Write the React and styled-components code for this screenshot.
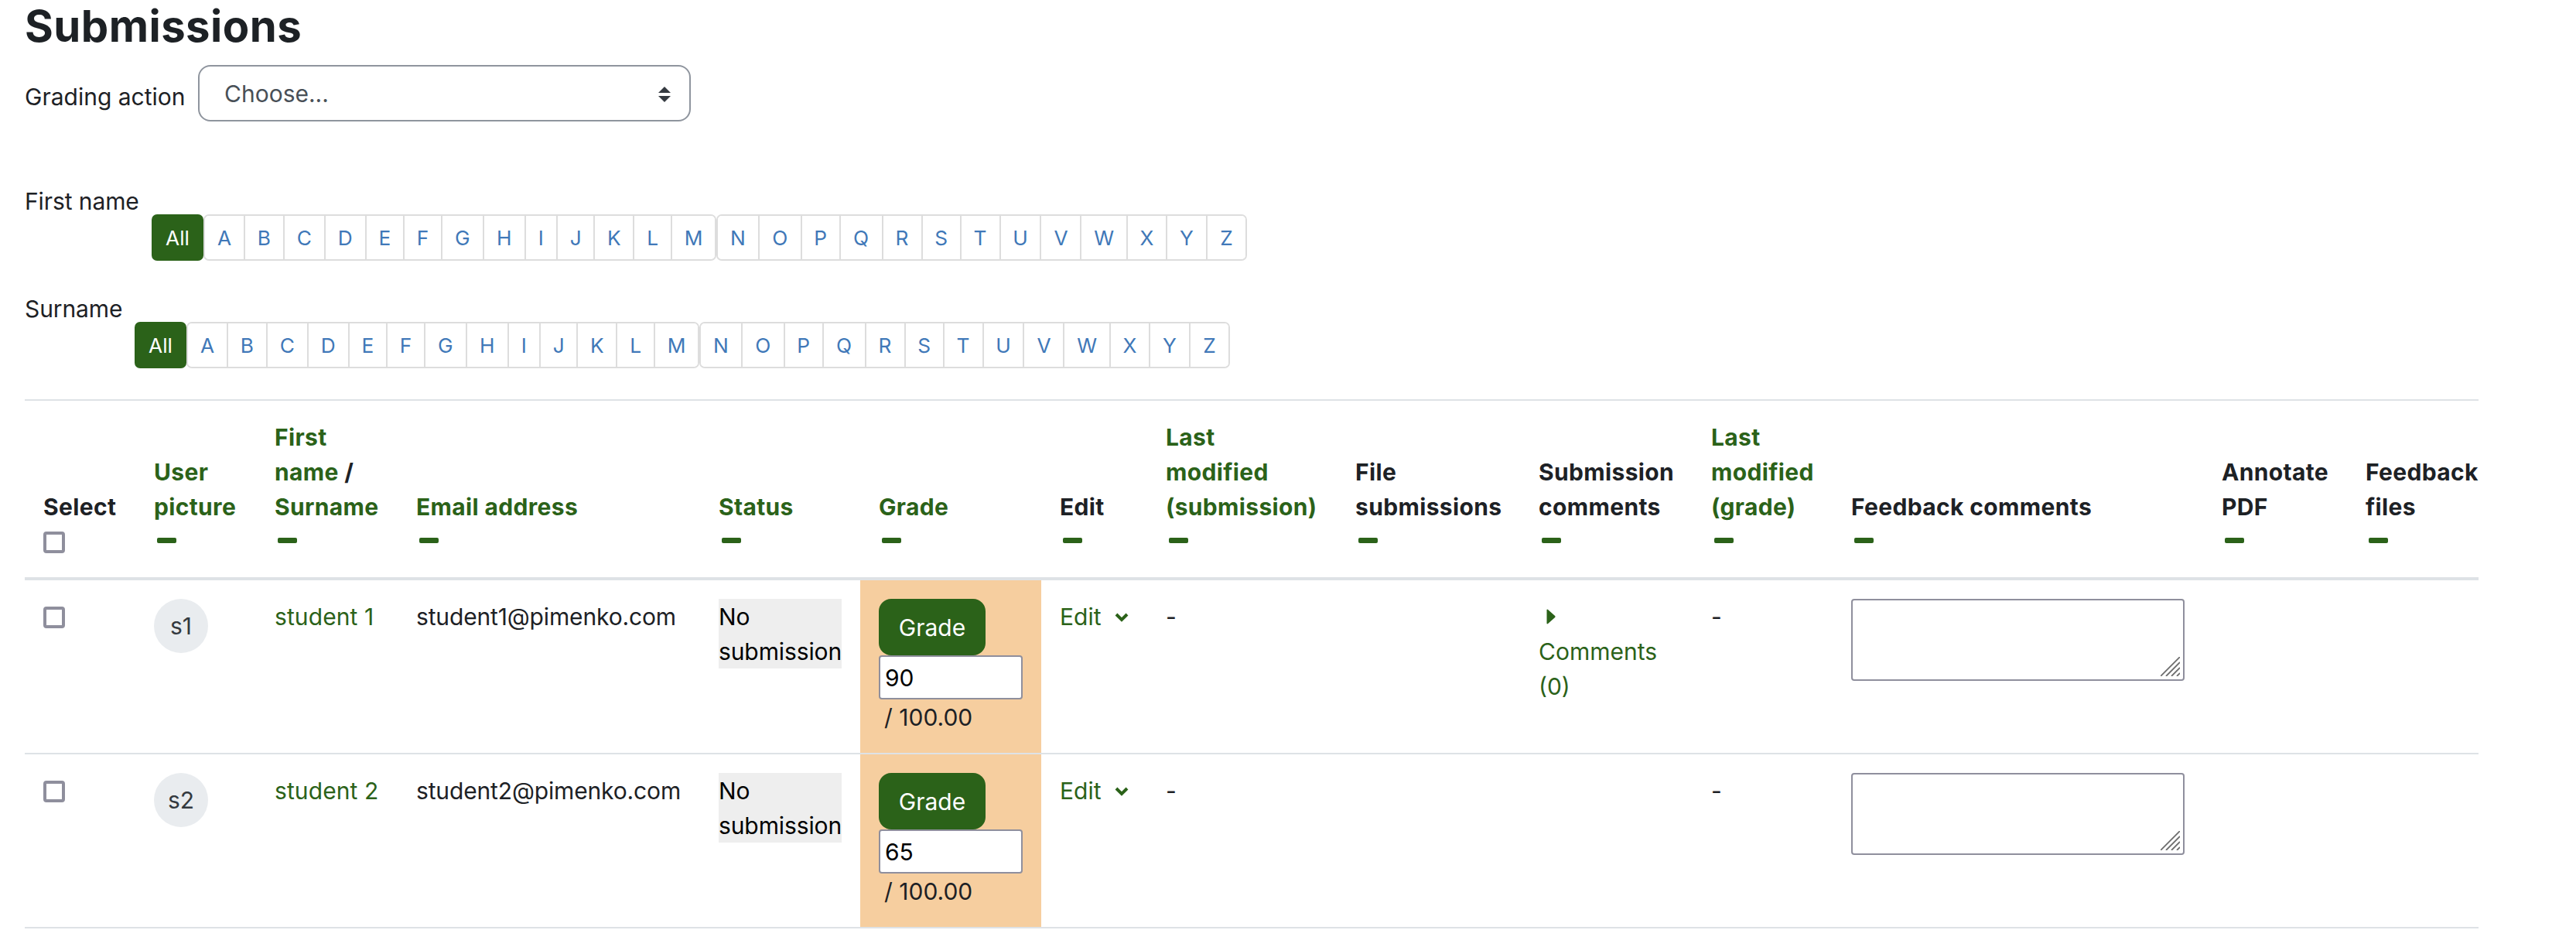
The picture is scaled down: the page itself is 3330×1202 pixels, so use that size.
import React, { useState } from 'react';
import styled, { createGlobalStyle, css } from 'styled-components';

const GREEN = '#2b6219';

const GlobalStyle = createGlobalStyle`
  *, *::before, *::after {
    box-sizing: border-box;
  }

  body {
    margin: 0;
    background: #ffffff;
    color: #1d2125;
    font-family: Inter, "Liberation Sans", sans-serif;
    font-size: 30px;
    line-height: 45px;
  }
`;

const Page = styled.main`
  width: 3330px;
  height: 1202px;
  padding-left: 32px;
  overflow: hidden;
`;

const Title = styled.h2`
  margin: 0;
  height: 84px;
  font-size: 56.25px;
  line-height: 69px;
  font-weight: 700;
  letter-spacing: 0.45px;
`;

const ActionRow = styled.div`
  display: flex;
  height: 154px;
`;

const ActionLabel = styled.label`
  width: 224px;
  padding-top: 19px;
  white-space: nowrap;
`;

const SelectBox = styled.button`
  display: flex;
  justify-content: space-between;
  align-items: center;
  width: 637px;
  height: 73px;
  padding: 2px 24px 0 32px;
  border: 2px solid #8f959e;
  border-radius: 16px;
  background: #ffffff;
  color: #495057;
  font: inherit;
`;

const InitialBar = styled.div`
  display: flex;
  height: ${p => p.$height}px;
`;

const InitialLabel = styled.span`
  width: ${p => p.$width}px;
  letter-spacing: -0.1px;
  white-space: nowrap;
`;

const InitialList = styled.div`
  display: flex;
  height: 60px;
  margin-top: 39px;
`;

const InitialGroup = styled.div`
  display: flex;
  width: ${p => p.$width}px;
  border: 2px solid #dddddd;
  border-radius: 7px;
  overflow: hidden;
`;

const Initial = styled.button`
  flex: ${p => p.$width} 0 0;
  padding: 0;
  border: none;
  background: #ffffff;
  color: #4078b8;
  font: inherit;
  font-size: 26.25px;
  text-align: center;
  cursor: pointer;

  & + & {
    border-left: 2px solid #dddddd;
  }
`;

const AllButton = styled(Initial)`
  flex: none;
  width: 67px;
  border-radius: 7px;
  background: ${GREEN};
  color: #ffffff;
`;

const Table = styled.table`
  width: 3172px;
  table-layout: fixed;
  border-collapse: separate;
  border-spacing: 0;
`;

const HeadCell = styled.th`
  height: 234px;
  padding: 24px 0 24px 24px;
  border-top: 2px solid #dee2e6;
  border-bottom: 4px solid #dee2e6;
  font-weight: 700;
  letter-spacing: 0.35px;
  text-align: left;
  vertical-align: bottom;
`;

const Cell = styled.td`
  height: 225px;
  padding: 24px 0 24px 24px;
  border-bottom: 2px solid #dee2e6;
  text-align: left;
  vertical-align: top;
  white-space: nowrap;

  ${p => p.$graded && css`
    background: #f6ce9f;
  `}
`;

const HeadLine = styled.div`
  height: 45px;
  padding-top: 1px;
  white-space: nowrap;
`;

const Text = styled.div`
  padding-top: 1px;
  letter-spacing: ${p => p.$spacing || 0}px;
`;

const Link = styled.span`
  color: ${GREEN};
  cursor: pointer;
`;

const ToggleLine = styled.div`
  display: flex;
  align-items: center;
  height: 45px;
  padding-bottom: 2px;
`;

const Minus = styled.span`
  width: 25px;
  height: 7px;
  margin-left: 4px;
  border-radius: 2px;
  background: ${GREEN};
`;

const Checkbox = styled.input`
  display: block;
  appearance: none;
  width: 28px;
  height: 28px;
  margin: ${p => (p.$head ? '4px' : '10px')} 0 0;
  border: 4px solid #8f8f9d;
  border-radius: 4px;
  background: #ffffff;
`;

const Avatar = styled.span`
  display: flex;
  justify-content: center;
  align-items: center;
  width: 70px;
  height: 70px;
  border-radius: 50%;
  background: #e9ecef;
  color: #343a40;
`;

const Status = styled.div`
  width: 159px;
  height: 90px;
  padding-top: 1px;
  background: #eeeeee;
  color: #000000;
  letter-spacing: -0.1px;
`;

const GradeButton = styled.button`
  display: block;
  width: 138px;
  height: 73px;
  padding: 2px 0 0;
  border: none;
  border-radius: 16px;
  background: ${GREEN};
  color: #ffffff;
  font: inherit;
`;

const GradeInput = styled.input`
  display: block;
  width: 186px;
  height: 57px;
  padding: 1px 6px 0;
  border: 2px solid #8f8f9d;
  border-radius: 4px;
  background: #ffffff;
  color: #000000;
  font: inherit;
`;

const MaxGrade = styled(Text)`
  height: 45px;
  padding-left: 7px;
`;

const EditMenu = styled(Link)`
  display: flex;
  align-items: center;
  height: 47px;
  gap: 18px;
`;

const CaretLine = styled.div`
  display: flex;
  align-items: center;
  height: 45px;
  padding-left: 10px;
`;

const Feedback = styled.div`
  display: flex;
  justify-content: flex-end;
  align-items: flex-end;
  width: 431px;
  height: 106px;
  padding: 4px;
  border: 2px solid #8f8f9d;
  border-radius: 4px;
  background: #ffffff;
`;

const halves = [
  [['A', 52], ['B', 51], ['C', 53], ['D', 53], ['E', 49], ['F', 49], ['G', 54], ['H', 54], ['I', 41], ['J', 48], ['K', 51], ['L', 49], ['M', 57]],
  [['N', 54], ['O', 55], ['P', 50], ['Q', 55], ['R', 51], ['S', 50], ['T', 51], ['U', 53], ['V', 52], ['W', 60], ['X', 51], ['Y', 52], ['Z', 51]],
];

const columns = [
  { width: 143, lines: ['Select'], plain: true, checkbox: true },
  { width: 156, lines: ['User', 'picture'] },
  { width: 183, lines: ['First', 'name', 'Surname'], slash: 1 },
  { width: 391, lines: ['Email address'] },
  { width: 207, lines: ['Status'] },
  { width: 234, lines: ['Grade'] },
  { width: 137, lines: ['Edit'], plain: true },
  { width: 245, lines: ['Last', 'modified', '(submission)'] },
  { width: 237, lines: ['File', 'submissions'], plain: true },
  { width: 223, lines: ['Submission', 'comments'], plain: true },
  { width: 181, lines: ['Last', 'modified', '(grade)'] },
  { width: 479, lines: ['Feedback comments'], plain: true },
  { width: 186, lines: ['Annotate', 'PDF'], plain: true },
  { width: 170, lines: ['Feedback', 'files'], plain: true },
];

const students = [
  { initials: 's1', name: 'student 1', email: 'student1@pimenko.com', grade: '90', comments: true },
  { initials: 's2', name: 'student 2', email: 'student2@pimenko.com', grade: '65', comments: false },
];

function Initials({ label, labelWidth, height }) {
  return (
    <InitialBar $height={height}>
      <InitialLabel $width={labelWidth}>{label}</InitialLabel>
      <InitialList>
        <AllButton>All</AllButton>
        {halves.map((letters, i) => (
          <InitialGroup key={i} $width={i === 0 ? 663 : 686}>
            {letters.map(([letter, width]) => (
              <Initial key={letter} $width={width}>{letter}</Initial>
            ))}
          </InitialGroup>
        ))}
      </InitialList>
    </InitialBar>
  );
}

function Head({ column }) {
  const Label = column.plain ? React.Fragment : Link;
  return (
    <HeadCell>
      {column.lines.map((line, i) => (
        <HeadLine key={line}>
          <Label>{line}</Label>
          {column.slash === i && ' /'}
        </HeadLine>
      ))}
      <ToggleLine>
        {column.checkbox ? <Checkbox type="checkbox" $head /> : <Minus />}
      </ToggleLine>
    </HeadCell>
  );
}

function StudentRow({ student }) {
  const [grade, setGrade] = useState(student.grade);

  return (
    <tr>
      <Cell><Checkbox type="checkbox" /></Cell>
      <Cell><Avatar>{student.initials}</Avatar></Cell>
      <Cell><Text $spacing={0.1}><Link>{student.name}</Link></Text></Cell>
      <Cell><Text $spacing={-0.15}>{student.email}</Text></Cell>
      <Cell><Status>No<br />submission</Status></Cell>
      <Cell $graded>
        <GradeButton>Grade</GradeButton>
        <GradeInput value={grade} onChange={e => setGrade(e.target.value)} />
        <MaxGrade>/ 100.00</MaxGrade>
      </Cell>
      <Cell>
        <EditMenu>
          Edit
          <svg width="18" height="12" viewBox="0 0 18 12" fill="none" stroke={GREEN} strokeWidth="4">
            <path d="M2 2l7 7 7-7" />
          </svg>
        </EditMenu>
      </Cell>
      <Cell><Text>-</Text></Cell>
      <Cell />
      <Cell>
        {student.comments && (
          <Link>
            <CaretLine>
              <svg width="12" height="20" viewBox="0 0 12 20" fill={GREEN}>
                <path d="M.5 1.4v17.2q.2 1.6 1.6.5l9-8.2q.9-.9 0-1.8l-9-8.2Q.7-.2.5 1.4z" />
              </svg>
            </CaretLine>
            <Text>Comments<br />(0)</Text>
          </Link>
        )}
      </Cell>
      <Cell><Text>-</Text></Cell>
      <Cell>
        <Feedback>
          <svg width="25" height="25" viewBox="0 0 25 25" stroke="#6e6e6e" strokeWidth="1.8">
            <path d="M0 25L25 0M7 25L25 7M14 25L25 14M21 25L25 21" />
          </svg>
        </Feedback>
      </Cell>
      <Cell />
      <Cell />
    </tr>
  );
}

export default function App() {
  return (
    <Page>
      <GlobalStyle />
      <Title>Submissions</Title>
      <ActionRow>
        <ActionLabel>Grading action</ActionLabel>
        <SelectBox>
          Choose...
          <svg width="16" height="20" viewBox="0 0 16 20" fill="#343a40">
            <path d="M0 8L8 0l8 8zM0 12h16l-8 8z" />
          </svg>
        </SelectBox>
      </ActionRow>
      <Initials label="First name" labelWidth={164} height={139} />
      <Initials label="Surname" labelWidth={142} height={139} />
      <Table>
        <colgroup>
          {columns.map((column, i) => <col key={i} width={column.width} />)}
        </colgroup>
        <thead>
          <tr>
            {columns.map((column, i) => <Head key={i} column={column} />)}
          </tr>
        </thead>
        <tbody>
          {students.map(student => <StudentRow key={student.name} student={student} />)}
        </tbody>
      </Table>
    </Page>
  );
}
